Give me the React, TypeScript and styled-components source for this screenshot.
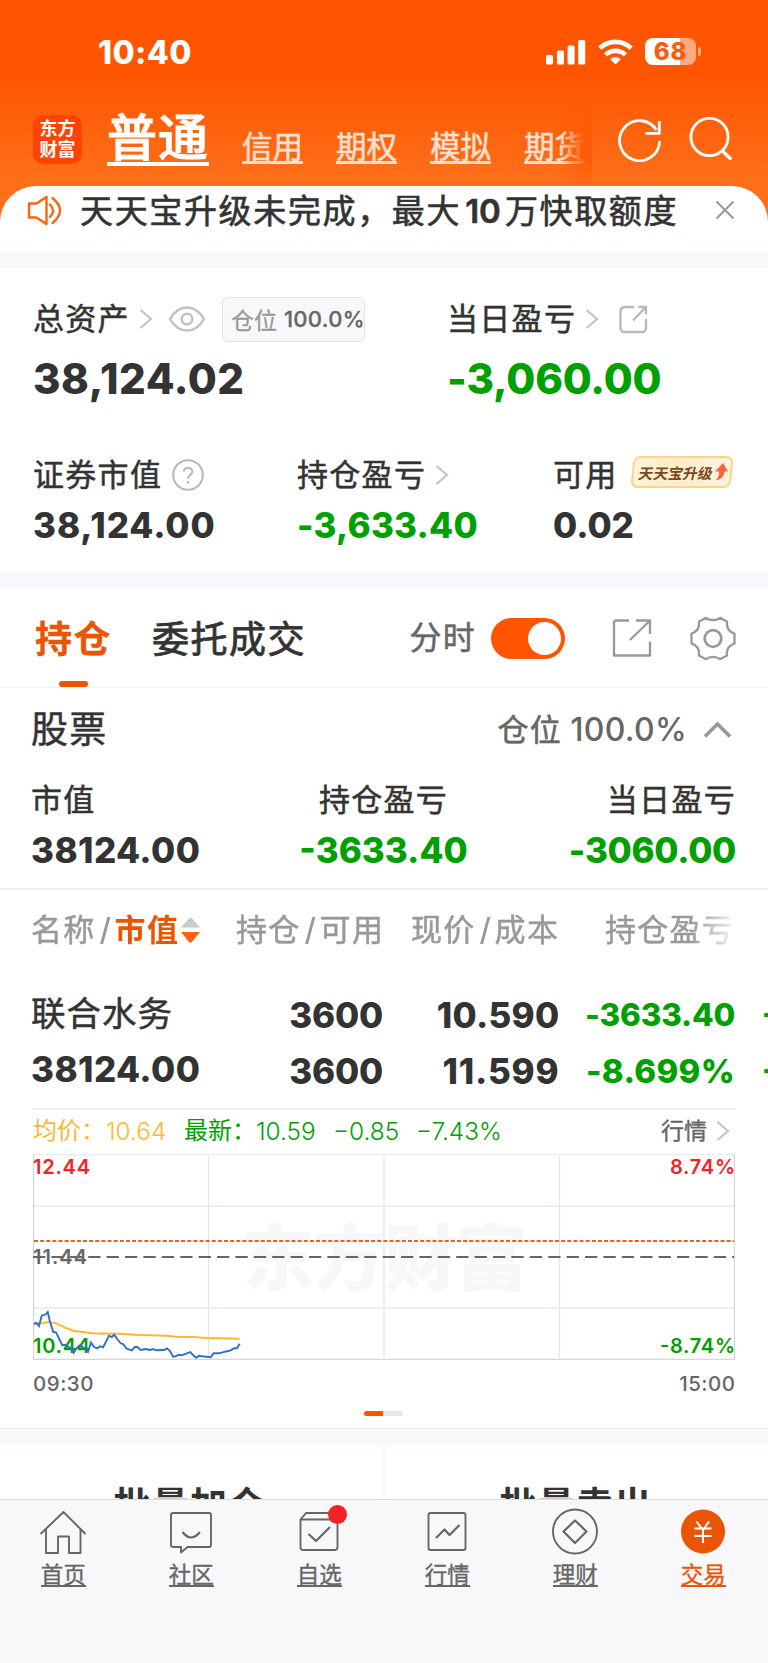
import React from "react";
import styled, { createGlobalStyle, css } from "styled-components";

const INK = "#333333";
const GREEN = "#00a000";
const ORANGE = "#ea5504";
const GREY = "#999999";
const MID = "#666666";

const Global = createGlobalStyle`
  *, *::before, *::after { box-sizing: border-box; }
  html, body { margin: 0; padding: 0; background: #fff; }
  body {
    font-family: Inter, "Noto Sans CJK SC", sans-serif;
    color: ${INK};
    -webkit-font-smoothing: antialiased;
  }
  svg { display: block; flex: none; }
`;

const Screen = styled.div`
  width: 768px;
  height: 1663px;
  overflow: hidden;
  display: flex;
  flex-direction: column;
  background: #f7f8fb;
`;

/* ---------- top ---------- */

const Hero = styled.header`
  height: 251px;
  flex: none;
  background: linear-gradient(180deg, #ff5500 0, #ff5500 75px, #ff6f1a 180px, #ff6f1a 100%);
`;

const StatusBar = styled.div`
  height: 96px;
  padding: 4px 72px 0 98px;
  display: flex;
  align-items: center;
  justify-content: space-between;
  color: #fff;
`;

const Clock = styled.span`
  font-size: 32px;
  font-weight: 800;
  line-height: 40px;
  letter-spacing: 0.4px;
  margin-top: 5px;
`;

const StatusIcons = styled.div`
  display: flex;
  align-items: center;
  gap: 12px;
  margin-top: 3px;
`;

const Battery = styled.div`
  position: relative;
  width: 51px;
  height: 27px;
  border-radius: 8px;
  background: linear-gradient(90deg, #fff 35px, #ffaa80 35px);
  color: #ff5a08;
  font-size: 24px;
  font-weight: 800;
  line-height: 27px;
  letter-spacing: 0.8px;
  text-align: center;
  &::after {
    content: "";
    position: absolute;
    right: -5px;
    top: 9px;
    width: 3px;
    height: 9px;
    border-radius: 0 3px 3px 0;
    background: #ffaa80;
  }
`;

const TopNav = styled.div`
  height: 90px;
  display: flex;
  align-items: flex-start;
`;

const Logo = styled.div`
  width: 49px;
  height: 49px;
  margin: 19px 25px 0 33px;
  border-radius: 10px;
  background: #ff4400;
  color: #fff;
  font-size: 18px;
  font-weight: 700;
  line-height: 20.5px;
  padding-top: 4px;
  text-align: center;
`;

const MainTab = styled.span`
  margin-top: 18px;
  width: 102px;
  font-size: 50px;
  letter-spacing: 1px;
  font-weight: 500;
  -webkit-text-stroke: 1px currentColor;
  line-height: 48px;
  color: #fff;
  border-bottom: 4px solid #fff;
  white-space: nowrap;
`;

const SubTabs = styled.div`
  position: relative;
  display: flex;
  width: 383px;
  height: 90px;
  padding: 37px 0 0 33px;
  gap: 33px;
  overflow: hidden;
  &::after {
    content: "";
    position: absolute;
    right: 0;
    top: 0;
    width: 32px;
    height: 90px;
    background: linear-gradient(90deg, rgba(255, 92, 8, 0), #ff5c08 75%);
    mask-image: linear-gradient(180deg, #000 70%, transparent);
  }
`;

const SubTab = styled.span`
  flex: none;
  width: 61px;
  height: 31px;
  font-size: 30.5px;
  line-height: 28px;
  font-weight: 400;
  -webkit-text-stroke: 0.6px currentColor;
  color: #ffdfcd;
  border-bottom: 3px solid #ffdfcd;
  white-space: nowrap;
`;

const TopIcons = styled.div`
  display: flex;
  gap: 26px;
  margin: 19.5px 0 0 26px;
`;

const Notice = styled.div`
  height: 65px;
  border-radius: 36px 36px 0 0;
  background: #fff;
  display: flex;
  align-items: flex-start;
  padding: 8px 33px 0 26px;
`;

const NoticeText = styled.span`
  flex: 1;
  margin-left: 17px;
  font-size: 33px;
  letter-spacing: 1.65px;
  line-height: 34px;
  font-weight: 400;
  -webkit-text-stroke: 0.6px currentColor;
  white-space: nowrap;
`;

const NoticeNumber = styled.span`
  margin: 0 4px 0 4px;
  font-weight: 600;
  letter-spacing: 0;
`;

/* ---------- shared ---------- */

type TextProps = { $c?: string; $w?: number; $ls?: number; $size?: number };

const Label = styled.span<TextProps>`
  font-size: ${(p) => p.$size ?? 31}px;
  letter-spacing: ${(p) => p.$ls ?? 1.3}px;
  font-weight: ${(p) => p.$w ?? 400};
  -webkit-text-stroke: ${(p) => (p.$w ? 0 : 0.5)}px currentColor;
  line-height: 36px;
  color: ${(p) => p.$c ?? INK};
  white-space: nowrap;
`;

const Figure = styled.span<TextProps>`
  display: block;
  font-size: ${(p) => p.$size ?? 35}px;
  letter-spacing: ${(p) => p.$ls ?? 0}px;
  font-weight: ${(p) => p.$w ?? 800};
  line-height: 40px;
  color: ${(p) => p.$c ?? INK};
  white-space: nowrap;
`;

const StockName = styled(Figure)`
  font-weight: 400;
  -webkit-text-stroke: 0.5px currentColor;
`;

const LabelRow = styled.div`
  display: flex;
  align-items: center;
  height: 44px;
`;

/* ---------- assets ---------- */

const Assets = styled.section`
  height: 305px;
  flex: none;
  margin-top: 17px;
  background: #fff;
  padding: 29px 0 0 33px;
`;

const AssetsMain = styled.div`
  display: grid;
  grid-template-columns: 414px 1fr;
`;

const AssetsSub = styled.div`
  display: grid;
  grid-template-columns: 264px 256px 1fr;
  margin-top: 54px;
`;

const AssetTotal = styled(Figure)`
  margin-top: 18px;
  font-size: 42px;
`;

const AssetFigure = styled(Figure)`
  margin-top: 8px;
`;

const PositionBadge = styled.div`
  margin-left: 16px;
  width: 143px;
  height: 45px;
  padding-left: 8px;
  display: flex;
  align-items: center;
  gap: 7px;
  border: 1.5px solid #e3e3e6;
  border-radius: 6px;
  background: #f8f8fb;
  font-size: 23px;
  color: ${GREY};
  -webkit-text-stroke: 0.3px currentColor;
  white-space: nowrap;
`;

const BadgeValue = styled.b`
  font-size: 22px;
  font-weight: 500;
  letter-spacing: 0.3px;
  color: ${MID};
`;

const Upgrade = styled.div`
  margin: -7px 0 0 14px;
  width: 100px;
  height: 32px;
  display: flex;
  align-items: center;
  gap: 2px;
  padding-left: 5px;
  border: 2px solid #ffd583;
  border-radius: 7px;
  background: linear-gradient(90deg, #fff4dc, #ffecc8 40%, #fff3df);
  transform: skewX(-6deg);
  font-size: 14.8px;
  font-weight: 700;
  color: #7a4a22;
  white-space: nowrap;
  span { transform: skewX(-6deg); }
`;

/* ---------- holdings ---------- */

const Holdings = styled.section`
  height: 840px;
  flex: none;
  margin-top: 16px;
  background: #fff;
  border-bottom: 1px solid #eeeeee;
  overflow: hidden;
`;

const Tabs = styled.div`
  height: 99px;
  display: flex;
  align-items: center;
  padding: 0 32.5px 0 35px;
  border-bottom: 1px solid #f3f3f3;
`;

const Tab = styled.div<{ $active?: boolean }>`
  position: relative;
  height: 98px;
  line-height: 101px;
  font-size: 37px;
  letter-spacing: 1.5px;
  margin-right: 40px;
  white-space: nowrap;
  font-weight: 400;
  -webkit-text-stroke: 0.8px currentColor;
  ${(p) =>
    p.$active &&
    css`
      color: ${ORANGE};
      font-weight: 700;
      -webkit-text-stroke: 0.3px currentColor;
      &::after {
        content: "";
        position: absolute;
        left: 24px;
        bottom: 0;
        width: 29px;
        height: 6px;
        border-radius: 3px;
        background: ${ORANGE};
      }
    `}
`;

const Toggle = styled.div`
  width: 74px;
  height: 41px;
  margin: 0 47px 0 14.5px;
  padding: 4px;
  border-radius: 21px;
  background: #ff5500;
  display: flex;
  justify-content: flex-end;
  &::after {
    content: "";
    width: 33px;
    height: 33px;
    border-radius: 50%;
    background: #fff;
  }
`;

const Spacer = styled.div`
  flex: 1;
`;

const GroupHead = styled.div`
  height: 82px;
  display: flex;
  align-items: center;
  padding: 1px 36px 0 31px;
`;

const Ratio = styled(Figure)`
  margin-left: 8px;
`;

const Summary = styled.div`
  height: 120px;
  padding: 12px 32px 0 31px;
  display: flex;
  justify-content: space-between;
  border-bottom: 2px solid #f0f0f0;
`;

const SummaryCell = styled.div<{ $align: string }>`
  width: 235px;
  display: flex;
  flex-direction: column;
  gap: 12px;
  align-items: ${(p) => p.$align};
`;

const TableHead = styled.div`
  height: 80px;
  display: grid;
  grid-template-columns: 205px 175px 194px 1fr;
  align-items: center;
  padding-left: 31px;
  margin-right: 33px;
  overflow: hidden;
  mask-image: linear-gradient(90deg, #000 690px, transparent 740px);
`;

const HeadCell = styled.div`
  display: flex;
  align-items: center;
`;

const Slash = styled.span`
  width: 19px;
  text-align: center;
  font-size: 31px;
  font-weight: 500;
  line-height: 36px;
  color: ${GREY};
`;

const StockRow = styled.div`
  height: 138px;
  display: grid;
  grid-template-columns: 205px 147px 176.5px 175.5px 60px;
  padding: 25px 0 0 31px;
  overflow: hidden;
`;

const StockCell = styled.div<{ $right?: boolean; $first?: boolean; $next?: boolean }>`
  display: flex;
  flex-direction: column;
  gap: ${(p) => (p.$first ? 15 : 16)}px;
  align-items: ${(p) => (p.$right ? "flex-end" : "flex-start")};
  margin-top: ${(p) => (p.$first ? -1 : 0)}px;
  padding-left: ${(p) => (p.$next ? 27 : 0)}px;
`;

const Quote = styled.div`
  height: 46px;
  margin: 0 33px;
  padding-bottom: 2px;
  border-top: 2px solid #eeeeee;
  display: flex;
  align-items: center;
  font-size: 24.4px;
  font-weight: 350;
  line-height: 40px;
  white-space: nowrap;
`;

const QuoteItem = styled.span<{ $c: string; $w: number; $text?: boolean }>`
  color: ${(p) => p.$c};
  width: ${(p) => p.$w}px;
  font-weight: ${(p) => (p.$text ? 400 : 350)};
  font-size: ${(p) => (p.$text ? 24 : 24.4)}px;
`;

const QuoteLink = styled.span`
  margin-left: auto;
  font-size: 23px;
  font-weight: 400;
  -webkit-text-stroke: 0.4px currentColor;
  color: ${MID};
  display: flex;
  align-items: center;
  gap: 9px;
  padding-right: 5px;
`;

const ChartBox = styled.div`
  margin: 0 33px;
  height: 206px;
`;

const TimeAxis = styled.div`
  display: flex;
  justify-content: space-between;
  margin: 14px 32.5px 0 33px;
  font-size: 20.5px;
  letter-spacing: 0.5px;
  line-height: 20px;
  font-weight: 550;
  color: ${MID};
`;

const Pager = styled.div`
  margin: 17px auto 0 364px;
  width: 39px;
  height: 5px;
  border-radius: 3px;
  background: linear-gradient(90deg, #ff5500 19px, #e6e6e6 19px);
`;

/* ---------- bottom ---------- */

const Bulk = styled.div`
  display: flex;
  gap: 4px;
  height: 54px;
  flex: none;
  margin-top: 16px;
  overflow: hidden;
`;

const BulkButton = styled.div`
  flex: 1;
  background: #fff;
  padding: 39px 2px 0 0;
  text-align: center;
  font-size: 37px;
  line-height: 44px;
  letter-spacing: 1.3px;
  font-weight: 700;
`;

const BottomNav = styled.nav`
  flex: 1;
  display: flex;
  background: #f8f8fb;
  border-top: 1px solid #dcdcdc;
`;

const NavItem = styled.div<{ $active?: boolean }>`
  position: relative;
  flex: 1;
  display: flex;
  flex-direction: column;
  align-items: center;
  padding: 8px 1.5px 0 0;
  color: ${(p) => (p.$active ? ORANGE : MID)};
`;

const NavLabel = styled.span`
  margin-top: 8px;
  width: 45px;
  font-size: 22.5px;
  line-height: 21px;
  border-bottom: 2px solid currentColor;
  -webkit-text-stroke: 0.35px currentColor;
  white-space: nowrap;
`;

const Dot = styled.i`
  position: absolute;
  left: 72px;
  top: 5px;
  width: 19px;
  height: 19px;
  border-radius: 50%;
  background: #f52222;
`;

/* ---------- icons ---------- */

const ChevronSvg = styled.svg<{ $ml: number }>`
  margin-left: ${(p) => p.$ml}px;
`;

const Chevron = ({ ml = 9 }: { ml?: number }) => (
  <ChevronSvg $ml={ml} width="14" height="22" viewBox="0 0 14 22" fill="none" stroke="#c4c4c4" strokeWidth="2.2">
    <path d="M1.5 2 12 11 1.5 20" />
  </ChevronSvg>
);

const Signal = () => (
  <svg width="40" height="26" viewBox="0 0 40 26" fill="#fff">
    <rect x="0" y="16" width="7" height="9.5" rx="1.6" />
    <rect x="11" y="11.5" width="7" height="14" rx="1.6" />
    <rect x="21.6" y="6.5" width="7" height="19" rx="1.6" />
    <rect x="32.2" y="1" width="7" height="24.5" rx="1.6" />
  </svg>
);

const Wifi = () => (
  <svg width="35" height="26" viewBox="0 0 35 26" fill="none" stroke="#fff" strokeWidth="4.6">
    <path d="M1.8 9.2a22.6 22.6 0 0 1 31.4 0" />
    <path d="M7.6 15.8a14.4 14.4 0 0 1 19.8 0" />
    <path d="M17.5 25.5l-5.2-5.3a7.4 7.4 0 0 1 10.4 0z" fill="#fff" stroke="none" />
  </svg>
);

const Refresh = () => (
  <svg width="45" height="46" viewBox="0 0 45 46" fill="none" stroke="#fff" strokeWidth="2.8">
    <path d="M41.6 25A20 20 0 1 1 38.5 14" />
    <path d="M41.3 5V17.3H27.5" />
  </svg>
);

const Search = () => (
  <svg width="44" height="46" viewBox="0 0 44 46" fill="none" stroke="#fff" strokeWidth="2.8">
    <circle cx="20.5" cy="21" r="18.6" />
    <path d="M32.5 34 42.3 43.5" strokeWidth="3.4" />
  </svg>
);

const Speaker = () => (
  <svg width="37" height="34" viewBox="0 0 37 34" fill="none" stroke="#ff6210" strokeWidth="2.4" strokeLinejoin="round" strokeLinecap="round">
    <path d="M3 9.500h7.500L20.500 3v27l-10-6.500H3z" />
    <path d="M24 10.500q6 6.200 0 12.500M26.500 4q15 12.500 0 25" />
  </svg>
);

const CloseSvg = styled.svg`
  margin-top: 6px;
`;

const Close = () => (
  <CloseSvg width="20" height="20" viewBox="0 0 20 20" stroke="#999" strokeWidth="2">
    <path d="M1.500 1.500 18.500 18.500M18.500 1.500 1.500 18.500" />
  </CloseSvg>
);

const Eye = () => (
  <ChevronSvg $ml={15} width="38" height="28" viewBox="0 0 38 28" fill="none" stroke="#c2c2c2" strokeWidth="2.500">
    <path d="M2 14C6.500 6 12 2.500 19 2.500S31.500 6 36 14C31.500 22 26 25.500 19 25.500S6.500 22 2 14z" />
    <circle cx="19" cy="14" r="5.300" />
  </ChevronSvg>
);

const ShareRound = () => (
  <ChevronSvg $ml={20} width="29" height="29" viewBox="0 0 29 29" fill="none" stroke="#b8b8b8" strokeWidth="2.300">
    <path d="M15 2H5.500A4 4 0 0 0 1.500 6v17a4 4 0 0 0 4 4h17.500a4 4 0 0 0 4-4v-9" />
    <path d="M19.500 2H27v7.500M27 2 14 15.500" />
  </ChevronSvg>
);

const ShareSquare = () => (
  <svg width="40" height="40" viewBox="0 0 40 40" fill="none" stroke="#999" strokeWidth="2.300">
    <path d="M17 2.500H4a2 2 0 0 0-2 2V37.500h36V23.500" strokeLinejoin="round" />
    <path d="M24 2.500H38V16M38 2.500 18 22" />
  </svg>
);

const Gear = () => (
  <ChevronSvg $ml={38} width="46" height="46" viewBox="-23 -23.5 46 46" fill="none" stroke="#999" strokeWidth="2.300" strokeLinejoin="round">
    <path d="M-7-20.700C-3-17.500 3-17.500 7-20.700L14-17C13.500-11 15-7.500 21.500-5V5C15 7.500 13.500 11 14 17L7 20.700C3 17.500-3 17.500-7 20.700L-14 17C-13.500 11-15 7.500-21.500 5V-5C-15-7.500-13.500-11-14-17Z" />
    <circle r="8.300" strokeWidth="2.800" />
  </ChevronSvg>
);

const Help = () => (
  <ChevronSvg $ml={10} width="32" height="32" viewBox="0 0 32 32" fill="none" stroke="#b8b8b8" strokeWidth="2.100">
    <circle cx="16" cy="16" r="14.800" />
    <path d="M11.800 12.600c0-5 8.500-5 8.500 0 0 3.400-4.300 3.400-4.300 7.200M16 22v2.400" />
  </ChevronSvg>
);

const Up = () => (
  <ChevronSvg $ml={16} width="29" height="18" viewBox="0 0 29 18" fill="none" stroke="#999" strokeWidth="3.600">
    <path d="M2 15.500 14.500 3 27 15.500" />
  </ChevronSvg>
);

const Sort = () => (
  <ChevronSvg $ml={2} width="19" height="26" viewBox="0 0 19 26">
    <path d="M0 10.500 8.500 1h2L19 10.500z" fill="#c9c9c9" />
    <path d="M0 15 8.500 25.500h2L19 15z" fill="#ff6010" />
  </ChevronSvg>
);

const RiseArrow = () => (
  <svg width="13" height="18" viewBox="0 0 13 18">
    <path d="M7 0 13 8.500H9.500C9.500 12.500 7 16.500 1.500 17.500 4 15 4.500 12 4 8.500H0z" fill="#ff6038" />
  </svg>
);

const NavIcon = ({ kind }: { kind: string }) => (
  <svg width="48" height="48" viewBox="0 0 48 48" fill="none" stroke={MID} strokeWidth="1.900" strokeLinejoin="round">
    {kind === "home" && <path d="M1.500 26 24.500 4 46.500 26M7 21v24H19V28.500H30V45H41.500V21" />}
    {kind === "chat" && (
      <>
        <path d="M6 5h36a2 2 0 0 1 2 2v30a2 2 0 0 1-2 2H20.500L14 44.500V39H6a2 2 0 0 1-2-2V7a2 2 0 0 1 2-2z" />
        <path d="M15.500 24q8.500 11 17.500 0" strokeWidth="2.200" />
      </>
    )}
    {kind === "pick" && (
      <>
        <path d="M5.500 11.500V39.500a2.500 2.500 0 0 0 2.500 2.500H40a2.500 2.500 0 0 0 2.500-2.500V11.500zM5.500 11.500 11 5H37L42.500 11.500" />
        <path d="M13.500 26 21 33 35 19" strokeWidth="2.200" />
      </>
    )}
    {kind === "market" && (
      <>
        <rect x="5.500" y="5" width="37" height="37" rx="2" />
        <path d="M13 30 21.500 21.500 26.500 27 36.500 17" strokeWidth="2.200" />
      </>
    )}
    {kind === "wealth" && (
      <>
        <circle cx="24" cy="23.500" r="22" />
        <path d="M24 12.500 35.500 23.500 24 35 12.500 23.500z" strokeWidth="2.200" />
      </>
    )}
    {kind === "trade" && (
      <>
        <circle cx="24" cy="23.500" r="22" fill={ORANGE} stroke="none" />
        <path d="M17.500 13.500 24 22 30 13.500M24 22V35M15.500 20.500h17M15.500 28h17" stroke="#fff" strokeWidth="2" strokeLinejoin="miter" />
      </>
    )}
  </svg>
);

/* ---------- chart ---------- */

const PRICE =
  "1,170.3 3,168.7 6,172 8.7,161.7 12.7,160.3 14.7,158 17,167.7 20.3,178 23,178.3 26.3,185 29.3,191.3 32.3,190.7 34.7,192.7 37.7,194 40.7,198.7 43.7,194 47,191.3 51,194 55,197.7 58,188.7 61,193 64,194.3 67,192.3 70,193.3 73,187.7 76,181.7 78.7,183 81.3,180.7 84.3,185 87.7,189.3 90,190 93.7,194.7 99,196.3 101.7,193 104.3,193 107.7,196 113,195 117,196 120.3,195 123,196.3 131,196 134,194.3 137,197 140,202.7 142.7,202.3 145.7,200.7 148.7,201.3 157.3,198 160.3,201.3 163.3,203.7 166,201.7 169,202.3 177.7,203.3 180.7,199.3 186.3,199.3 192,197.7 197,196.7 201.3,194.3 204,194.3 206.7,189.7";
const AVERAGE =
  "1,170 3.7,169 9.3,169.3 15.3,168 23.7,169.3 32,173.7 41,177 48.7,177.7 58.7,179.3 83.7,179.7 107,181 133.7,181.7 143.7,182.7 160.3,183 173.7,184 206.7,184.7";

const AxisText = styled.text`
  font-family: Inter, sans-serif;
  font-size: 20px;
  font-weight: 580;
`;

const Watermark = styled.text`
  font-family: "Noto Sans CJK SC", sans-serif;
  font-size: 72px;
  font-weight: 900;
  fill: #f7f7f7;
`;

const Chart = () => (
  <svg width="702" height="206" viewBox="0 0 702 206" fill="none">
    <Watermark x="209" y="130" textLength="286">东方财富</Watermark>
    <path d="M0 52.300H702M0 154H702" stroke="#e8eaf2" strokeWidth="1.600" />
    <path d="M175.500 2V204M351 2V204M526.500 2V204" stroke="#e2e4ee" strokeWidth="1.200" />
    <path d="M0 .500H702" stroke="#ebebee" strokeWidth="1.500" />
    <path d="M.500 0V206M701.500 0V206M0 205.500H702" stroke="#d5d5df" strokeWidth="1.300" />
    <path d="M1 87H701" stroke="#f06010" strokeWidth="2" strokeDasharray="4 2.130" />
    <AxisText x="0" y="19.500" fill="#fa1e28" textLength="57">12.44</AxisText>
    <AxisText x="0" y="109.500" fill={MID} textLength="54">11.44</AxisText>
    <AxisText x="0" y="199" fill={GREEN} textLength="57">10.44</AxisText>
    <AxisText x="702" y="19.500" fill="#fa1e28" textAnchor="end" textLength="65">8.74%</AxisText>
    <AxisText x="702" y="199" fill={GREEN} textAnchor="end" textLength="75">-8.74%</AxisText>
    <path d="M0 103H701" stroke={MID} strokeWidth="2" strokeDasharray="12.300 6.100" />
    <polyline points={AVERAGE} stroke="#ffb732" strokeWidth="1.900" />
    <polyline points={PRICE} stroke="#2f72c4" strokeWidth="1.900" />
  </svg>
);

const NAV = [
  ["home", "首页"],
  ["chat", "社区"],
  ["pick", "自选"],
  ["market", "行情"],
  ["wealth", "理财"],
  ["trade", "交易"],
];

export default function App() {
  return (
    <Screen>
      <Global />
      <Hero>
        <StatusBar>
          <Clock>10:40</Clock>
          <StatusIcons>
            <Signal />
            <Wifi />
            <Battery>68</Battery>
          </StatusIcons>
        </StatusBar>
        <TopNav>
          <Logo>东方<br />财富</Logo>
          <MainTab>普通</MainTab>
          <SubTabs>
            <SubTab>信用</SubTab>
            <SubTab>期权</SubTab>
            <SubTab>模拟</SubTab>
            <SubTab>期货</SubTab>
          </SubTabs>
          <TopIcons>
            <Refresh />
            <Search />
          </TopIcons>
        </TopNav>
        <Notice>
          <Speaker />
          <NoticeText>
            天天宝升级未完成，最大<NoticeNumber>10</NoticeNumber>万快取额度
          </NoticeText>
          <Close />
        </Notice>
      </Hero>

      <Assets>
        <AssetsMain>
          <div>
            <LabelRow>
              <Label>总资产</Label>
              <Chevron />
              <Eye />
              <PositionBadge>
                仓位<BadgeValue>100.0%</BadgeValue>
              </PositionBadge>
            </LabelRow>
            <AssetTotal $ls={0.5}>38,124.02</AssetTotal>
          </div>
          <div>
            <LabelRow>
              <Label>当日盈亏</Label>
              <Chevron />
              <ShareRound />
            </LabelRow>
            <AssetTotal $ls={-0.2} $c={GREEN}>-3,060.00</AssetTotal>
          </div>
        </AssetsMain>
        <AssetsSub>
          <div>
            <LabelRow>
              <Label>证券市值</Label>
              <Help />
            </LabelRow>
            <AssetFigure $ls={0.9}>38,124.00</AssetFigure>
          </div>
          <div>
            <LabelRow>
              <Label>持仓盈亏</Label>
              <Chevron />
            </LabelRow>
            <AssetFigure $ls={0.2} $c={GREEN}>-3,633.40</AssetFigure>
          </div>
          <div>
            <LabelRow>
              <Label>可用</Label>
              <Upgrade>
                <span>天天宝升级</span>
                <RiseArrow />
              </Upgrade>
            </LabelRow>
            <AssetFigure>0.02</AssetFigure>
          </div>
        </AssetsSub>
      </Assets>

      <Holdings>
        <Tabs>
          <Tab $active>持仓</Tab>
          <Tab>委托成交</Tab>
          <Spacer />
          <Label $size={32} $c={MID}>分时</Label>
          <Toggle />
          <ShareSquare />
          <Gear />
        </Tabs>
        <GroupHead>
          <Label $size={37}>股票</Label>
          <Spacer />
          <Label $c={MID}>仓位</Label>
          <Ratio $size={32} $w={550} $ls={0.3} $c={MID}>100.0%</Ratio>
          <Up />
        </GroupHead>
        <Summary>
          <SummaryCell $align="flex-start">
            <Label>市值</Label>
            <Figure $ls={0.4}>38124.00</Figure>
          </SummaryCell>
          <SummaryCell $align="center">
            <Label>持仓盈亏</Label>
            <Figure $c={GREEN}>-3633.40</Figure>
          </SummaryCell>
          <SummaryCell $align="flex-end">
            <Label>当日盈亏</Label>
            <Figure $ls={-0.3} $c={GREEN}>-3060.00</Figure>
          </SummaryCell>
        </Summary>
        <TableHead>
          <HeadCell>
            <Label $c={GREY}>名称</Label>
            <Slash>/</Slash>
            <Label $c={ORANGE} $w={700}>市值</Label>
            <Sort />
          </HeadCell>
          <HeadCell>
            <Label $c={GREY}>持仓</Label>
            <Slash>/</Slash>
            <Label $c={GREY}>可用</Label>
          </HeadCell>
          <HeadCell>
            <Label $c={GREY}>现价</Label>
            <Slash>/</Slash>
            <Label $c={GREY}>成本</Label>
          </HeadCell>
          <HeadCell>
            <Label $c={GREY}>持仓盈亏</Label>
          </HeadCell>
        </TableHead>
        <StockRow>
          <StockCell $first>
            <StockName $size={34.5} $ls={1}>联合水务</StockName>
            <Figure $ls={0.4}>38124.00</Figure>
          </StockCell>
          <StockCell $right>
            <Figure $ls={-0.2}>3600</Figure>
            <Figure $ls={-0.2}>3600</Figure>
          </StockCell>
          <StockCell $right>
            <Figure $ls={0.3}>10.590</Figure>
            <Figure $ls={0.8}>11.599</Figure>
          </StockCell>
          <StockCell $right>
            <Figure $size={31.5} $ls={-0.2} $c={GREEN}>-3633.40</Figure>
            <Figure $size={33} $ls={0.3} $c={GREEN}>-8.699%</Figure>
          </StockCell>
          <StockCell $next>
            <Figure $size={31.5} $c={GREEN}>-3060.00</Figure>
            <Figure $size={33} $c={GREEN}>-7.430%</Figure>
          </StockCell>
        </StockRow>
        <Quote>
          <QuoteItem $text $c="#ffb732" $w={73}>均价：</QuoteItem>
          <QuoteItem $c="#ffb732" $w={78}>10.64</QuoteItem>
          <QuoteItem $text $c={GREEN} $w={72}>最新：</QuoteItem>
          <QuoteItem $c={GREEN} $w={77}>10.59</QuoteItem>
          <QuoteItem $c={GREEN} $w={83}>−0.85</QuoteItem>
          <QuoteItem $c={GREEN} $w={90}>−7.43%</QuoteItem>
          <QuoteLink>
            行情
            <Chevron ml={0} />
          </QuoteLink>
        </Quote>
        <ChartBox>
          <Chart />
        </ChartBox>
        <TimeAxis>
          <span>09:30</span>
          <span>15:00</span>
        </TimeAxis>
        <Pager />
      </Holdings>

      <Bulk>
        <BulkButton>批量加仓</BulkButton>
        <BulkButton>批量卖出</BulkButton>
      </Bulk>

      <BottomNav>
        {NAV.map(([kind, text]) => (
          <NavItem key={kind} $active={kind === "trade"}>
            <NavIcon kind={kind} />
            {kind === "pick" && <Dot />}
            <NavLabel>{text}</NavLabel>
          </NavItem>
        ))}
      </BottomNav>
    </Screen>
  );
}
